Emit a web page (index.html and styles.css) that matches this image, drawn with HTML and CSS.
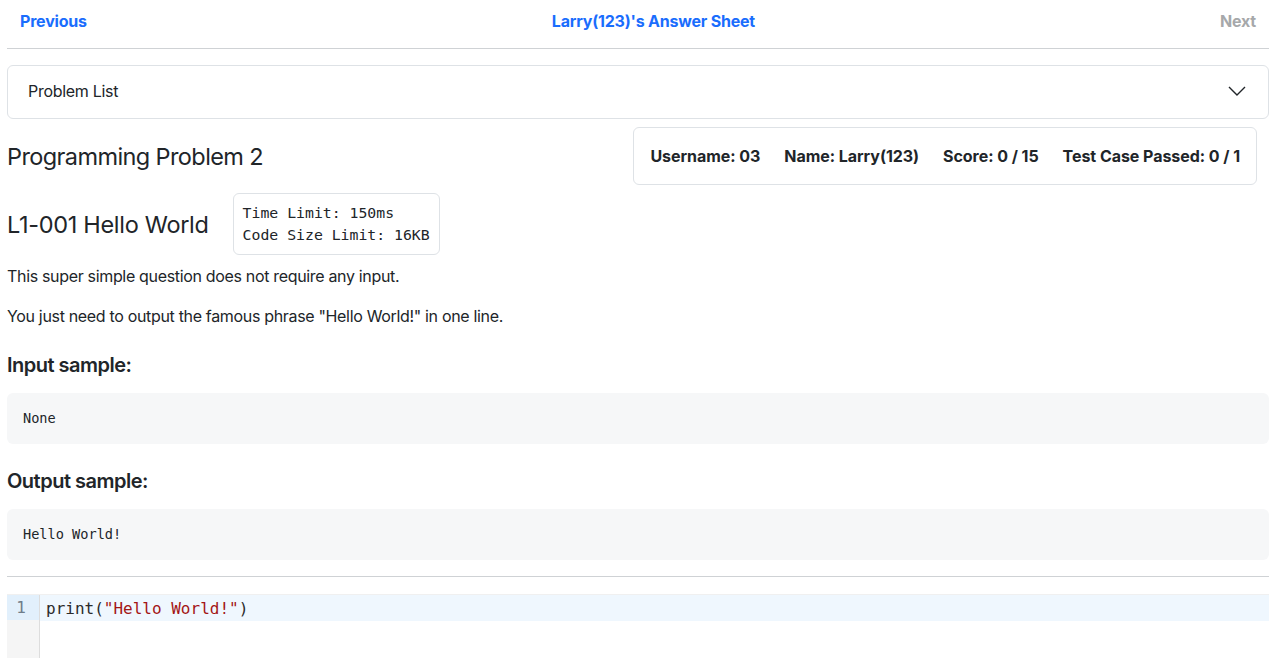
FILE: index.html
```html
<!DOCTYPE html>
<html lang="en">
<head>
<meta charset="utf-8">
<title>Answer Sheet</title>
<link rel="stylesheet" href="styles.css">
</head>
<body>
<div class="page">
  <nav class="topnav">
    <a class="nav-link" href="#">Previous</a>
    <a class="nav-link" href="#">Larry(123)'s Answer Sheet</a>
    <span class="nav-link disabled">Next</span>
  </nav>

  <div class="collapse-card">
    <span>Problem List</span>
    <svg class="chevron" width="18" height="10" viewBox="0 0 18 10"><path d="M1 1 L9 9 L17 1" fill="none" stroke="#212529" stroke-width="1.4"/></svg>
  </div>

  <div class="title-row">
    <h2 class="title">Programming Problem 2</h2>
    <div class="info-box">
      <span>Username: 03</span>
      <span>Name: Larry(123)</span>
      <span>Score: 0 / 15</span>
      <span>Test Case Passed: 0 / 1</span>
    </div>
  </div>

  <div class="problem-row">
    <h2 class="title wide">L1-001 Hello World</h2>
    <div class="limit-box">
      <div>Time Limit: 150ms</div>
      <div>Code Size Limit: 16KB</div>
    </div>
  </div>

  <p>This super simple question does not require any input.</p>
  <p>You just need to output the famous phrase "Hello World!" in one line.</p>

  <h3 class="sub">Input sample:</h3>
  <pre class="sample">None</pre>

  <h3 class="sub">Output sample:</h3>
  <pre class="sample">Hello World!</pre>

  <hr class="divider">

  <div class="editor">
    <div class="gutter">
      <div class="ln active">1</div>
    </div>
    <div class="code">
      <div class="line active">print(<span class="str">"Hello World!"</span>)</div>
    </div>
  </div>
</div>
</body>
</html>
```
FILE: styles.css
```css
* { box-sizing: border-box; }
html, body { margin: 0; padding: 0; background: #fff; }
body {
  font-family: Inter, "Noto Sans", "Liberation Sans", sans-serif;
  color: #212529;
  font-size: 16px;
  line-height: 24px;
}
.page { padding: 0 1px 0 7px; }
.topnav {
  display: flex;
  justify-content: space-between;
  align-items: center;
  height: 49px;
  padding: 0 13px 7px 13px;
  border-bottom: 1px solid #cfd2d5;
}
.nav-link {
  color: #1a6dfd;
  font-weight: 700;
  text-decoration: none;
  font-size: 16px;
  letter-spacing: -0.2px;
}
.nav-link.disabled { color: #a6a8aa; }
.collapse-card {
  margin-top: 16px;
  height: 54px;
  border: 1px solid #dee2e6;
  border-radius: 6px;
  display: flex;
  align-items: center;
  justify-content: space-between;
  padding: 0 22px 2px 20px;
  font-size: 16px;
  letter-spacing: -0.3px;
}
.title-row {
  display: flex;
  justify-content: space-between;
  align-items: center;
  margin-top: 8px;
  padding-right: 12px;
}
.title {
  margin: 0;
  font-size: 23.5px;
  font-weight: 400;
  line-height: 29px;
  letter-spacing: -0.6px;
}
.title.wide { letter-spacing: -0.3px; }
.info-box {
  display: flex;
  gap: 24px;
  align-items: center;
  height: 58px;
  padding: 0 16px;
  border: 1px solid #dee2e6;
  border-radius: 6px;
  font-weight: 700;
  letter-spacing: -0.05px;
}
.problem-row {
  display: flex;
  align-items: center;
  gap: 24px;
  margin-top: 8px;
}
.limit-box {
  border: 1px solid #dee2e6;
  border-radius: 6px;
  padding: 8px 9px;
  font-family: "DejaVu Sans Mono", "Liberation Mono", monospace;
  font-size: 14.8px;
  line-height: 22px;
}
p { margin: 9px 0 16px; letter-spacing: -0.33px; }
p + p { margin-top: 0; }
.sub {
  margin: 25px 0 16px;
  font-size: 20px;
  font-weight: 600;
  line-height: 24px;
  letter-spacing: -0.5px;
}
.sample {
  margin: 0;
  background: #f6f7f8;
  border-radius: 6px;
  padding: 16px 16px;
  height: 51px;
  font-family: "DejaVu Sans Mono", "Liberation Mono", monospace;
  font-size: 13.6px;
  line-height: 18px;
}
.divider {
  margin: 16px 0 17px;
  border: 0;
  border-top: 1px solid #cfd2d5;
}
.editor {
  display: flex;
  height: 64px;
  border-top: 1px solid #f0f0f0;
  font-family: "DejaVu Sans Mono", "Liberation Mono", monospace;
  font-size: 16px;
  line-height: 25px;
}
.gutter {
  width: 33px;
  background: #f5f5f5;
  border-right: 1px solid #dddddd;
}
.ln {
  color: #6f7d8a;
  text-align: center;
  padding-right: 4px;
}
.ln.active { background: #e2f0fc; }
.code { flex: 1; }
.line { padding-left: 6px; padding-top: 1px; color: #2b2b2b; }
.line.active { background: #eff7fe; }
.str { color: #a31515; }
```
